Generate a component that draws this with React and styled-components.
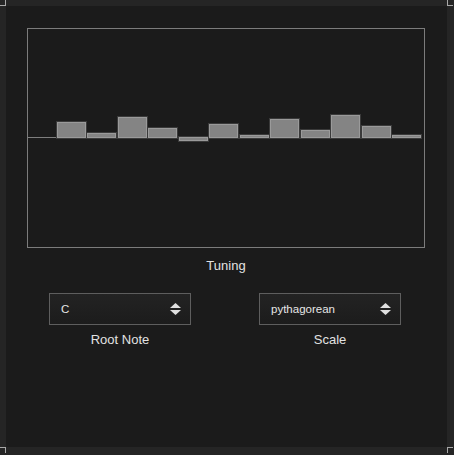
import React from "react";
import styled, { createGlobalStyle } from "styled-components";

const Global = createGlobalStyle`
  html, body { margin: 0; padding: 0; background: #252525; }
  body { font-family: "Liberation Sans", Arial, sans-serif; }
`;

const Frame = styled.div`
  position: relative;
  width: 454px;
  height: 455px;
  padding: 6px 7px 8px 6px;
  box-sizing: border-box;
  background: #252525;
`;

const Corner = styled.span`
  position: absolute;
  width: 6px;
  height: 6px;
  box-sizing: border-box;
  border: 0 solid #a8a8a8;
  ${(p) => (p.$top ? "top: 0;" : "top: 447px;")}
  ${(p) => (p.$left ? "left: 0;" : "left: 447px;")}
  ${(p) => (p.$left ? "border-right-width: 1px;" : "border-left-width: 1px;")}
  ${(p) => (p.$top ? "border-bottom-width: 1px;" : "border-top-width: 1px;")}
`;

const Panel = styled.div`
  width: 441px;
  height: 441px;
  background: #1b1b1b;
  box-sizing: border-box;
  padding: 22px 22px 0 21px;
  display: flex;
  flex-direction: column;
`;

const Graph = styled.div`
  width: 398px;
  height: 220px;
  box-sizing: border-box;
  border: 1px solid #7c7c7c;
  overflow: hidden;
`;

const Label = styled.div`
  color: #e2e2e2;
  font-size: 13px;
  line-height: 16px;
  text-align: center;
`;

const GraphLabel = styled(Label)`
  margin-top: 10px;
`;

const Controls = styled.div`
  display: flex;
  gap: 68px;
  margin: 19px 0 0 22px;
`;

const Control = styled.div`
  width: 142px;
  display: flex;
  flex-direction: column;
  align-items: center;
  gap: 7px;
`;

const SelectBox = styled.div`
  width: 142px;
  height: 32px;
  box-sizing: border-box;
  border: 1px solid #5e5e5e;
  background: linear-gradient(#232323, #1c1c1c);
  display: flex;
  align-items: center;
  justify-content: space-between;
  padding: 0 9px 0 11px;
  color: #e6e6e6;
  font-size: 11.5px;
`;

const Arrows = () => (
  <svg width="11" height="12" viewBox="0 0 11 12">
    <path d="M5.5 0 L11 5 L0 5 Z" fill="#e0e0e0" />
    <path d="M0 7 L11 7 L5.5 12 Z" fill="#e0e0e0" />
  </svg>
);

const bars = [1, 16, 5, 21, 10, -4, 14, 3, 19, 8, 23, 12, 3];

const Chart = () => {
  const base = 108;
  return (
    <svg width="396" height="218" viewBox="0 0 396 218">
      {bars.map((h, i) => {
        const x0 = Math.round(-1.5 + 30.46 * i);
        const w = 29;
        let top, bottom;
        if (h >= 0) {
          top = base - h + 1;
          bottom = base;
        } else {
          top = base;
          bottom = base - h - 1;
        }
        const hh = bottom - top + 1;
        if (hh <= 2) {
          return <rect key={i} x={x0} y={top} width={w} height={hh} fill="#7e7e7e" />;
        }
        return (
          <g key={i}>
            <rect x={x0 - 0.5} y={top - 0.5} width={w + 1} height={hh + 1} fill="none" stroke="#3a3a3a" strokeWidth="1" />
            <rect x={x0 + 0.5} y={top + 0.5} width={w - 1} height={hh - 1} fill="#848484" stroke="#9a9a9a" strokeWidth="1" />
          </g>
        );
      })}
    </svg>
  );
};

const Select = ({ value }) => (
  <SelectBox>
    <span>{value}</span>
    <Arrows />
  </SelectBox>
);

export default function App() {
  return (
    <>
      <Global />
      <Frame>
        <Corner $top $left />
        <Corner $top />
        <Corner $left />
        <Corner />
        <Panel>
          <Graph>
            <Chart />
          </Graph>
          <GraphLabel>Tuning</GraphLabel>
          <Controls>
            <Control>
              <Select value="C" />
              <Label>Root Note</Label>
            </Control>
            <Control>
              <Select value="pythagorean" />
              <Label>Scale</Label>
            </Control>
          </Controls>
        </Panel>
      </Frame>
    </>
  );
}
